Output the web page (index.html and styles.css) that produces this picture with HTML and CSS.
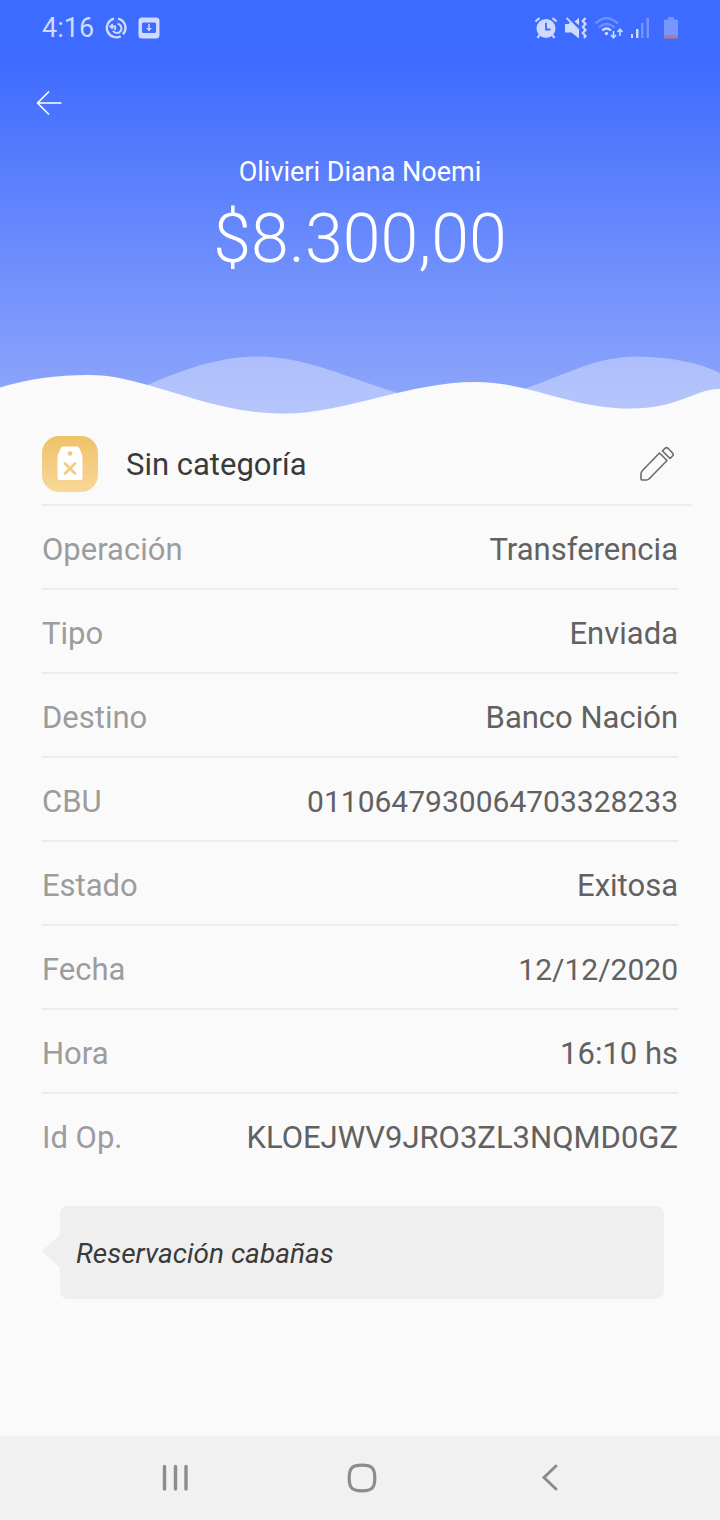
FILE: index.html
```html
<!DOCTYPE html>
<html lang="es">
<head>
<meta charset="utf-8">
<meta name="viewport" content="width=device-width, initial-scale=1">
<title>Detalle de transferencia</title>
<link rel="stylesheet" href="styles.css">
</head>
<body>
<div class="screen">
  <header class="hero">
    <div class="status">
      <div class="status-group status-left">
        <time class="clock">4:16</time>
        <svg width="24" height="24" viewBox="0 0 24 24" fill="none" stroke="currentColor" aria-hidden="true">
          <path d="M10 2.600A9.500 9.500 0 1 0 16.800 20.200M18.900 18.400A9.500 9.500 0 0 0 14 2.600" stroke-width="2.400"/>
          <path d="M13.500 7.800A4.600 4.600 0 1 1 9 14.800" stroke-width="2"/>
          <path d="M11.200 14V10.500H6.500M8.800 8.200L6.300 10.500L8.800 12.800" stroke-width="1.800"/>
        </svg>
        <svg width="22" height="22" viewBox="0 0 22 22" aria-hidden="true">
          <path fill="currentColor" fill-rule="evenodd" d="M4 .5h14A3.500 3.500 0 0 1 21.500 4v14a3.500 3.500 0 0 1-3.500 3.500H4A3.500 3.500 0 0 1 .5 18V4A3.500 3.500 0 0 1 4 .5ZM5.500 5.500Q4 5.500 4 7v7.500q0 1.500 1.500 1.500h11q1.500 0 1.500-1.500V7q0-1.500-1.500-1.500Z"/>
          <path d="M10.200 6.800h1.600V11h2L11 14.500L8.200 11h2Z" fill="currentColor"/>
        </svg>
      </div>
      <div class="status-group status-right">
        <svg width="24" height="24" viewBox="0 0 24 24" fill="none" stroke="currentColor" aria-hidden="true">
          <circle cx="12" cy="12.500" r="9.500" fill="currentColor" stroke="none"/>
          <path d="M1.500 5.500L5.500 2M22.500 5.500L18.500 2M5.500 19L3.500 22M18.500 19L20.500 22" stroke-width="2.200"/>
          <path class="cut" d="M12 6.800V13.500H16.500" stroke-width="1.800"/>
        </svg>
        <svg width="24" height="24" viewBox="0 0 24 24" fill="none" stroke="currentColor" aria-hidden="true">
          <path d="M1 8h3.500l1.700-1.700L15 15v7.500L7.500 16.500H1ZM10.500 5.500L15 1.800V9.300Z" fill="currentColor" stroke="none"/>
          <path d="M2.500 1.800L15 14.500" stroke-width="1.800"/>
          <path d="M21.500 2L18.800 5L21.500 8L18.800 11L21.500 14L18.800 17L21.500 20L20 22.200" stroke-width="2.200"/>
        </svg>
        <svg width="30" height="24" viewBox="0 0 30 24" fill="none" stroke="currentColor" aria-hidden="true">
          <g opacity=".35" stroke-width="2.300"><path d="M1.500 7.500Q12.500-3 24 7.500"/><path d="M5 11.500Q12.500 4.500 20.500 11.500"/></g>
          <path d="M8.200 14.500Q12.500 10.500 17 14.500" stroke-width="2.300"/>
          <circle cx="12.500" cy="17.500" r="1.700" fill="currentColor" stroke="none"/>
          <path d="M19.500 15V21.500M17 19L19.500 21.800L22 19M26 20V13.500M23.500 16L26 13.200L28.500 16" stroke-width="1.600"/>
        </svg>
        <svg width="20" height="24" viewBox="0 0 20 24" fill="currentColor" aria-hidden="true">
          <path d="M1 18h2v4H1zM6 13h2.500v9H6z"/>
          <path opacity=".38" d="M11 7h2.500v15H11zM16.500 2h2.500v20h-2.500z"/>
        </svg>
        <svg class="battery" width="14" height="24" viewBox="0 0 14 24" aria-hidden="true">
          <path fill="#7797ff" d="M4 2.500Q4 1 5.500 1h3Q10 1 10 2.500V3.500h3Q14 3.500 14 4.500V19H0V4.500Q0 3.500 1 3.500H4Z"/>
          <path fill="#bd7791" d="M0 19h14v2.500q0 1-1 1H1q-1 0-1-1Z"/>
        </svg>
      </div>
    </div>
    <button class="back" type="button" aria-label="Volver">
      <svg width="26" height="26" viewBox="0 0 26 26" fill="none" stroke="currentColor" stroke-width="1.600" aria-hidden="true"><path d="M25.500 13H1.500M13 1.500L1.500 13L13 24.500"/></svg>
    </button>
    <p class="payee">Olivieri Diana Noemi</p>
    <h1 class="amount">$8.300,00</h1>
    <svg class="waves" viewBox="0 0 720 64" preserveAspectRatio="none" aria-hidden="true">
      <path fill="#fafafb" fill-opacity=".36" d="M144 36.500C182 20 218 6.500 258 6.500C305 6.500 345 27 404 45C420 60 500 60 524 39C570 23 596 6.500 638 6.500C672 7 700 13 720 23V64H144Z"/>
      <path class="wave-front" d="M0 37.500C28 29 57 25 88 25C112 25 128 30 146 34.500C192 47 230 63.500 285 63.500C345 63.500 408 32 476 32C530 32 570 58.500 630 58.500C680 58.500 694 39 720 39V65H0Z"/>
    </svg>
  </header>

  <main class="details">
    <section class="category">
      <svg width="56" height="56" viewBox="0 0 56 56" aria-hidden="true">
        <defs><linearGradient id="gold" x1="0" y1="0" x2="0" y2="1"><stop stop-color="#efc269"/><stop offset="1" stop-color="#f8d798"/></linearGradient></defs>
        <rect width="56" height="56" rx="17" fill="url(#gold)"/>
        <path fill="#fff" d="M21 10.500h14q1.500 0 2.200 1.500l2.600 6q.7 1.500.7 3v21q0 2-2 2h-21q-2 0-2-2V21q0-1.500.7-3l2.600-6q.7-1.500 2.200-1.500Z"/>
        <circle cx="28" cy="17.500" r="2.300" fill="#f1c878"/>
        <path d="M23 27.500L33 37.500M33 27.500L23 37.500" stroke="#f4cd82" stroke-width="2.800" stroke-linecap="round"/>
      </svg>
      <h2 class="category-name">Sin categoría</h2>
      <button class="edit" type="button" aria-label="Editar categoría">
        <svg width="36" height="36" viewBox="0 0 36 36" fill="none" stroke="currentColor" stroke-width="1.600" stroke-linejoin="round" aria-hidden="true">
          <path d="M20.500 7L28 14.500L10.500 32.500Q9 34 7.500 34H3Q2 34 2 33V28Q2 26 3.500 24.500Z"/>
          <path d="M23.500 5L26 2.300Q27.500 1 29 2.300L33.500 7Q35 8.500 33.500 10L31 12.500Z"/>
        </svg>
      </button>
    </section>
    <dl class="rows">
      <div class="row"><dt>Operación</dt><dd>Transferencia</dd></div>
      <div class="row"><dt>Tipo</dt><dd>Enviada</dd></div>
      <div class="row"><dt>Destino</dt><dd>Banco Nación</dd></div>
      <div class="row"><dt>CBU</dt><dd class="digits">0110647930064703328233</dd></div>
      <div class="row"><dt>Estado</dt><dd>Exitosa</dd></div>
      <div class="row"><dt>Fecha</dt><dd class="digits">12/12/2020</dd></div>
      <div class="row"><dt>Hora</dt><dd>16:10 hs</dd></div>
      <div class="row"><dt>Id Op.</dt><dd>KLOEJWV9JRO3ZL3NQMD0GZ</dd></div>
    </dl>
    <div class="note">
      <svg class="note-tip" width="18" height="36" viewBox="0 0 18 36" aria-hidden="true"><path d="M18 0V33L0 16Z"/></svg>
      <p class="note-text">Reservación cabañas</p>
    </div>
  </main>

  <nav class="navbar" aria-label="Sistema">
    <button type="button" aria-label="Recientes"><svg width="30" height="30" viewBox="0 0 30 30" fill="none" stroke="currentColor" stroke-width="3.400" stroke-linecap="round"><path d="M4.500 3.500V26M15.500 3.500V26M26 3.500V26"/></svg></button>
    <button type="button" aria-label="Inicio"><svg width="30" height="30" viewBox="0 0 30 30" fill="none" stroke="currentColor" stroke-width="3.200"><path d="M15 2.200C25 2.200 27.800 5 27.800 15S25 27.800 15 27.800S2.200 25 2.200 15S5 2.200 15 2.200Z"/></svg></button>
    <button type="button" aria-label="Atrás"><svg width="30" height="30" viewBox="0 0 30 30" fill="none" stroke="currentColor" stroke-width="3" stroke-linecap="round"><path d="M22 3L10 14.500L22 26"/></svg></button>
  </nav>
</div>
</body>
</html>
```
FILE: styles.css
```css
* { box-sizing: border-box; }

body {
  margin: 0;
  background: #fafafb;
  color: #3a3a3a;
  font-family: Roboto, "Noto Sans", sans-serif;
}

h1, h2, p, dl, dt, dd { margin: 0; font-weight: 400; }

button {
  padding: 0;
  border: 0;
  background: none;
  color: inherit;
  font: inherit;
}

svg { display: block; flex: none; }

.screen {
  display: flex;
  flex-direction: column;
  min-height: 100vh;
}

.hero {
  display: flex;
  flex-direction: column;
  color: #fff;
  background: linear-gradient(#3d6aff 52px, #91a8fa 416px);
}

.status {
  display: flex;
  justify-content: space-between;
  align-items: center;
  height: 56px;
  padding: 0 42px;
  color: #cfdaff;
}

.status-group { display: flex; align-items: center; }
.status-left { gap: 10px; }
.status-right { gap: 6px; }
.clock { font-size: 27px; line-height: 32px; }
.cut { stroke: #3d6aff; }
.battery { margin-left: 8px; }

.back {
  align-self: flex-start;
  margin: 24px 0 0 36px;
  padding: 10px 0;
}

.payee {
  margin-top: 30px;
  font-size: 27px;
  line-height: 32px;
  text-align: center;
}

.amount {
  margin-top: 11px;
  font-size: 68px;
  font-weight: 300;
  line-height: 80px;
  text-align: center;
}

.waves { width: 100%; height: 64px; margin-top: 71px; }
.wave-front { fill: #fafafb; }

.details { flex: 1; padding: 8px 42px 40px; }

.category {
  display: flex;
  align-items: center;
  gap: 28px;
  height: 84px;
  margin-right: -14px;
  padding: 2px 17px 0 0;
  border-bottom: 2px solid #ededee;
}

.category-name {
  flex: 1;
  padding-top: 2px;
  font-size: 31px;
  line-height: 36px;
}

.edit { color: #6c6c6c; }

.row {
  display: flex;
  justify-content: space-between;
  align-items: center;
  height: 84px;
  padding-top: 6px;
  border-bottom: 2px solid #ededee;
  font-size: 31px;
  line-height: 36px;
}

.row:last-child { border-color: transparent; }
.row dt { color: #9c9c9c; }
.row dd { color: #616161; }
.row .digits { font-size: 30px; }

.note { display: flex; align-items: center; margin: 28px 14px 0 0; }
.note-tip { fill: #efefef; }

.note-text {
  flex: 1;
  padding: 32px 16px 29px;
  border-radius: 8px;
  background: #efefef;
  font-size: 28px;
  font-style: italic;
  line-height: 32px;
}

.navbar {
  display: grid;
  grid-template-columns: repeat(3, 1fr);
  align-items: center;
  justify-items: center;
  height: 84px;
  padding: 0 78px 0 82px;
  background: #f1f1f1;
  color: #8c8c8c;
}
```
